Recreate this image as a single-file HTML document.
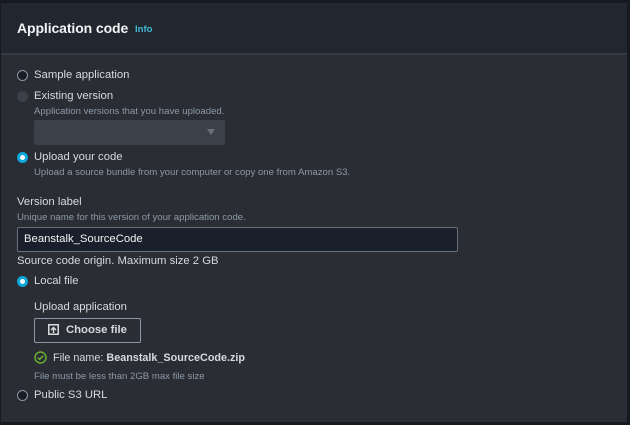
<!DOCTYPE html>
<html><head><style>
body{margin:0;width:630px;height:425px;background:#16191f;font-family:"Liberation Sans",sans-serif;overflow:hidden;position:relative}
.panel{position:absolute;left:1px;top:3px;width:626px;height:419px;background:#2a2d33}
.hdr{position:absolute;left:0;top:0;width:626px;height:50px;background:#22262e;border-bottom:2px solid #353a42}
.t{position:absolute;white-space:nowrap;color:#d5dbdb}
.r{position:absolute;width:9px;height:9px;border-radius:50%;border:1.5px solid #8d99a8;background:#1a1d23}
.r.on{border:3px solid #0da6d9;background:#fff;width:5px;height:5px}
.r.dis{border-color:#3b4049;background:#3b4049}
.s{font-size:9.6px;color:#8d99a8}
.m{font-size:11.3px}
.b{font-weight:bold}
</style></head><body>
<div class="panel">
<div class="hdr"></div>
<div class="t b" style="left:16px;top:17px;font-size:14px;letter-spacing:-0.1px;color:#f2f3f3">Application code</div>
<div class="t b" style="left:134px;top:21px;font-size:9.5px;color:#44b9d6">Info</div>
<div class="r" style="left:16px;top:67px"></div>
<div class="t m" style="left:33px;top:66px">Sample application</div>
<div class="r dis" style="left:16px;top:88px"></div>
<div class="t m" style="left:33px;top:87px">Existing version</div>
<div class="t s" style="left:33px;top:103px">Application versions that you have uploaded.</div>
<div style="position:absolute;left:33px;top:117px;width:191px;height:25px;background:#3b4049;border-radius:2px"></div>
<div style="position:absolute;left:206px;top:126px;border-left:4px solid transparent;border-right:4px solid transparent;border-top:6px solid #687078"></div>
<div class="r on" style="left:16px;top:149px"></div>
<div class="t m" style="left:33px;top:148px">Upload your code</div>
<div class="t s" style="left:33px;top:164px">Upload a source bundle from your computer or copy one from Amazon S3.</div>
<div class="t m" style="left:16px;top:193px">Version label</div>
<div class="t s" style="left:16px;top:209px">Unique name for this version of your application code.</div>
<div style="position:absolute;left:16px;top:224px;width:439px;height:23px;background:#19202b;border:1px solid #687078;border-radius:2px"></div>
<div class="t m" style="left:23px;top:230px;color:#f2f3f3">Beanstalk_SourceCode</div>
<div class="t m" style="left:16px;top:252px">Source code origin. Maximum size 2 GB</div>
<div class="r on" style="left:16px;top:273px"></div>
<div class="t m" style="left:33px;top:272px">Local file</div>
<div class="t m" style="left:33px;top:298px">Upload application</div>
<div style="position:absolute;left:33px;top:315px;width:105px;height:23px;border:1px solid #8d99a8;border-radius:2px"></div>
<svg style="position:absolute;left:47px;top:321px" width="11" height="11" viewBox="0 0 11 11"><rect x="0.75" y="0.75" width="9.5" height="9.5" fill="none" stroke="#d5dbdb" stroke-width="1.5"/><path d="M5.5 9V3.5M3 6l2.5-2.5L8 6" fill="none" stroke="#d5dbdb" stroke-width="1.5"/></svg>
<div class="t m b" style="left:65px;top:321px">Choose file</div>
<svg style="position:absolute;left:33px;top:348px" width="13" height="13" viewBox="0 0 13 13"><circle cx="6.5" cy="6.5" r="5.5" fill="none" stroke="#6aaf35" stroke-width="1.5"/><path d="M3.8 6.6l1.8 1.8 3.6-3.6" fill="none" stroke="#6aaf35" stroke-width="1.5"/></svg>
<div class="t" style="left:52px;top:349px;font-size:10.8px">File name: <b>Beanstalk_SourceCode.zip</b></div>
<div class="t s" style="left:33px;top:368px">File must be less than 2GB max file size</div>
<div class="r" style="left:16px;top:387px"></div>
<div class="t m" style="left:33px;top:386px">Public S3 URL</div>
</div>
</body></html>
